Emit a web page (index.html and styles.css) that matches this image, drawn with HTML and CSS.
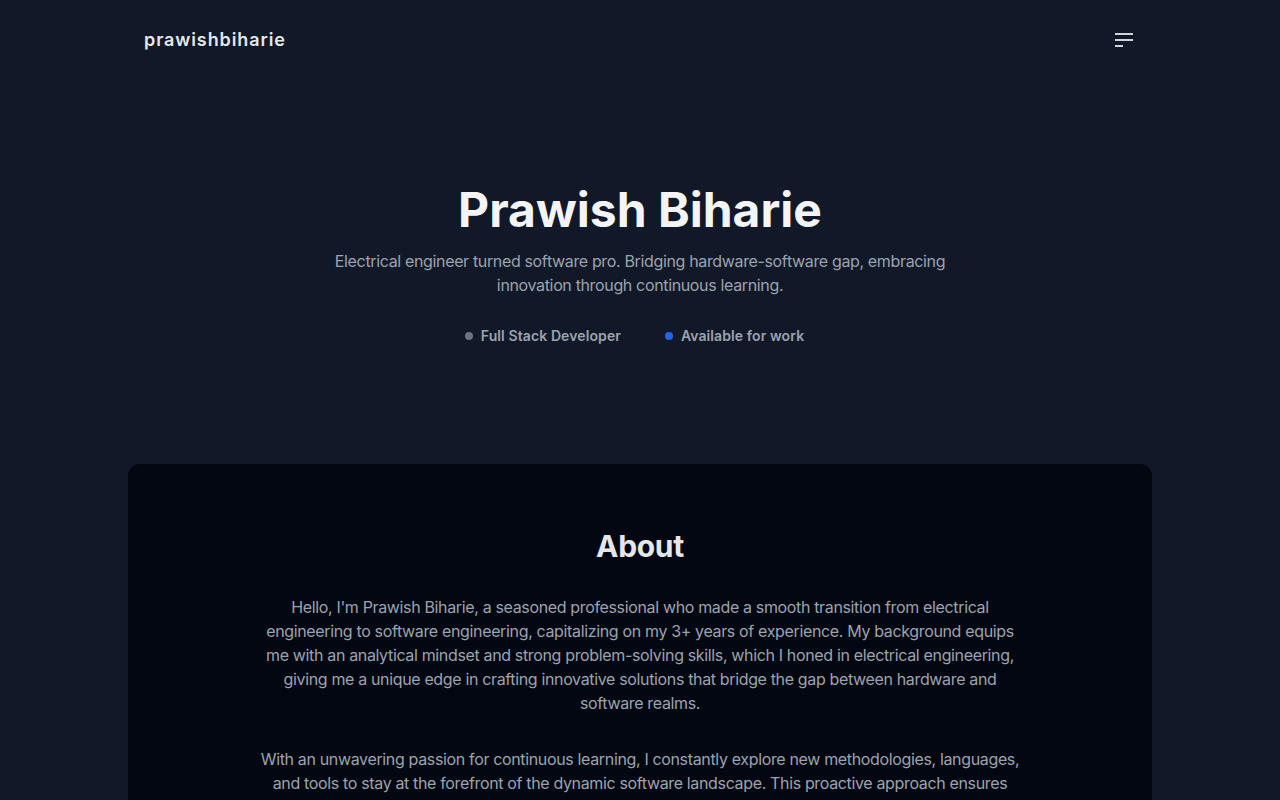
FILE: index.html
```html
<!DOCTYPE html>
<html lang="en">
<head>
<meta charset="utf-8">
<title>Prawish Biharie</title>
<link rel="stylesheet" href="styles.css">
</head>
<body>
<header class="site-header">
  <div class="container header-inner">
    <a class="logo" href="#">prawishbiharie</a>
    <button class="menu-btn" aria-label="Open menu">
      <svg width="24" height="24" viewBox="0 0 24 24" fill="none" stroke="currentColor" stroke-width="2" stroke-linecap="butt">
        <line x1="3" y1="6" x2="21" y2="6"/>
        <line x1="3" y1="12" x2="21" y2="12"/>
        <line x1="3" y1="18" x2="11" y2="18"/>
      </svg>
    </button>
  </div>
</header>

<main>
  <section class="hero">
    <h1 class="hero-title">Prawish Biharie</h1>
    <p class="hero-sub">Electrical engineer turned software pro. Bridging hardware-software gap, embracing innovation through continuous learning.</p>
    <div class="badges">
      <span class="badge"><span class="dot dot-gray"></span>Full Stack Developer</span>
      <span class="badge"><span class="dot dot-blue"></span>Available for work</span>
    </div>
  </section>

  <div class="container">
    <section class="card">
      <h2 class="card-title">About</h2>
      <div class="about-text">
        <p>Hello, I'm Prawish Biharie, a seasoned professional who made a smooth transition from electrical engineering to software engineering, capitalizing on my 3+ years of experience. My background equips me with an analytical mindset and strong problem-solving skills, which I honed in electrical engineering, giving me a unique edge in crafting innovative solutions that bridge the gap between hardware and software realms.</p>
        <p>With an unwavering passion for continuous learning, I constantly explore new methodologies, languages, and tools to stay at the forefront of the dynamic software landscape. This proactive approach ensures that I deliver modern, efficient and reliable solutions to every project I take on.</p>
      </div>
    </section>
  </div>
</main>
</body>
</html>
```

FILE: styles.css
```css
* { box-sizing: border-box; }
html, body { margin: 0; padding: 0; }
body {
  background: #111827;
  color: #9ca3af;
  font-family: Inter, "Noto Sans", "Liberation Sans", sans-serif;
  -webkit-font-smoothing: antialiased;
}
.container {
  max-width: 1024px;
  margin: 0 auto;
}
.site-header { height: 80px; }
.header-inner {
  height: 100%;
  padding: 0 16px;
  display: flex;
  align-items: center;
  justify-content: space-between;
}
.logo {
  color: #e5e7eb;
  text-decoration: none;
  font-size: 18px;
  font-weight: 600;
  letter-spacing: 0.05em;
  line-height: 28px;
}
.menu-btn {
  background: none;
  border: 0;
  padding: 0;
  color: #d1d5db;
  display: flex;
  cursor: pointer;
}
.hero {
  padding: 106px 16px 118px;
  display: flex;
  flex-direction: column;
  align-items: center;
  text-align: center;
}
.hero-title {
  margin: 0;
  font-size: 48px;
  line-height: 48px;
  font-weight: 700;
  color: #f3f4f6;
  letter-spacing: 0;
}
.hero-sub {
  margin: 15px 0 0;
  max-width: 640px;
  font-size: 16px;
  line-height: 24px;
  letter-spacing: -0.35px;
}
.badges {
  margin-top: 29px;
  padding-right: 11px;
  display: flex;
  gap: 44px;
  justify-content: center;
}
.badge {
  display: inline-flex;
  align-items: center;
  gap: 8px;
  font-size: 14px;
  line-height: 20px;
  font-weight: 600;
  letter-spacing: 0.1px;
}
.dot {
  width: 8px;
  height: 8px;
  border-radius: 50%;
}
.dot-gray { background: #6b7280; }
.dot-blue { background: #2563eb; }
.card {
  background: #030712;
  border-radius: 12px;
  padding: 64px 32px 64px;
  text-align: center;
}
.card-title {
  margin: 0;
  font-size: 30px;
  line-height: 36px;
  font-weight: 700;
  color: #e5e7eb;
  letter-spacing: -0.01em;
}
.about-text {
  max-width: 760px;
  margin: 31px auto 0;
  font-size: 16px;
  line-height: 24px;
  letter-spacing: -0.35px;
}
.about-text p { margin: 0 0 32px; }
.about-text p:last-child { margin-bottom: 0; }
```
